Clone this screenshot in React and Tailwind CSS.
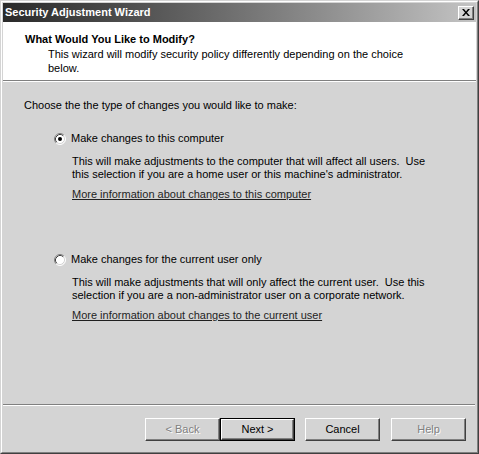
import React from 'react';

function Radio({ checked }) {
    return (
        <svg width="12" height="12" viewBox="0 0 12 12" className="shrink-0">
            <circle cx="6" cy="6" r="5" fill="#ffffff" />
            <path d="M2.11 9.89 A5.5 5.5 0 0 1 9.89 2.11" fill="none" stroke="#808080" strokeWidth="1" />
            <path d="M9.89 2.11 A5.5 5.5 0 0 1 2.11 9.89" fill="none" stroke="#ffffff" strokeWidth="1" />
            <path d="M2.82 9.18 A4.5 4.5 0 0 1 9.18 2.82" fill="none" stroke="#404040" strokeWidth="1" />
            <path d="M9.18 2.82 A4.5 4.5 0 0 1 2.82 9.18" fill="none" stroke="#d4d4d4" strokeWidth="1" />
            {checked && <circle cx="6" cy="6" r="2" fill="#000000" />}
        </svg>
    );
}

function Button({ label, disabled, isDefault }) {
    const face = (
        <div className="flex-1 flex items-center justify-center border border-t-white border-l-white border-r-[#404040] border-b-[#404040] shadow-[inset_-1px_-1px_0_#808080]">
            <span className={disabled ? 'text-[#808080] [text-shadow:1px_1px_0_#ffffff]' : 'text-black'}>{label}</span>
        </div>
    );
    if (isDefault) {
        return <div className="w-[75px] h-[23px] flex border border-black">{face}</div>;
    }
    return <div className="w-[75px] h-[23px] flex">{face}</div>;
}

function Choice({ checked, label, lines, link }) {
    return (
        <div className="flex flex-col">
            <div className="flex items-center h-[13px] pl-[51px] gap-[5px]">
                <Radio checked={checked} />
                <span>{label}</span>
            </div>
            <div className="pl-[69px] mt-[10px] leading-[13px]">
                {lines[0]}<br />{lines[1]}
            </div>
            <div className="pl-[69px] mt-[7px] leading-[13px]">
                <span className="underline text-[#1f1f1f]">{link}</span>
            </div>
        </div>
    );
}

export default function App() {
    return (
        <div className="w-[479px] h-[454px] flex font-['Liberation_Sans',sans-serif] text-[11px] leading-[13px] text-black border border-t-[#d4d4d4] border-l-[#d4d4d4] border-r-[#404040] border-b-[#404040]">
            <div className="flex-1 flex border border-t-white border-l-white border-r-[#808080] border-b-[#808080]">
                <div className="flex-1 flex flex-col p-px bg-[#d4d4d4]">
                    {/* Title bar */}
                    <div className="h-[19px] flex items-center justify-between pl-[2px] pr-[2px] bg-gradient-to-r from-[#2a2a2a] to-[#c4c4c4]">
                        <span className="font-bold text-white">Security Adjustment Wizard</span>
                        <div className="w-[16px] h-[14px] flex items-center justify-center bg-[#d4d4d4] border border-t-white border-l-white border-r-[#404040] border-b-[#404040] shadow-[inset_-1px_-1px_0_#808080]">
                            <svg width="8" height="7" viewBox="0 0 8 7">
                                <path d="M0 0h2l2 2.5L6 0h2L5 3.5 8 7H6L4 4.5 2 7H0l3-3.5z" fill="#000" />
                            </svg>
                        </div>
                    </div>

                    {/* Header */}
                    <div className="h-[59px] shrink-0 bg-white pt-[11px] border-b border-b-[#808080]">
                        <div className="pl-[22px] font-bold">What Would You Like to Modify?</div>
                        <div className="pl-[45px] mt-px leading-[14px]">
                            This wizard will modify security policy differently depending on the choice<br />below.
                        </div>
                    </div>
                    <div className="h-px bg-white" />

                    {/* Body */}
                    <div className="flex-1 flex flex-col pt-[17px]">
                        <div className="pl-[21px]">Choose the the type of changes you would like to make:</div>
                        <div className="mt-[20px]">
                            <Choice
                                checked
                                label="Make changes to this computer"
                                lines={[
                                    'This will make adjustments to the computer that will affect all users.\u00a0 Use',
                                    "this selection if you are a home user or this machine's administrator.",
                                ]}
                                link="More information about changes to this computer"
                            />
                        </div>
                        <div className="mt-[52px]">
                            <Choice
                                label="Make changes for the current user only"
                                lines={[
                                    'This will make adjustments that will only affect the current user.\u00a0 Use this',
                                    'selection if you are a non-administrator user on a corporate network.',
                                ]}
                                link="More information about changes to the current user"
                            />
                        </div>
                    </div>

                    {/* Footer */}
                    <div className="h-px bg-[#808080] mr-px" />
                    <div className="h-px bg-white mr-px" />
                    <div className="flex justify-end pt-[12px] pb-[10px] pr-[10px]">
                        <Button label="< Back" disabled />
                        <Button label="Next >" isDefault />
                        <div className="w-[10px]" />
                        <Button label="Cancel" />
                        <div className="w-[11px]" />
                        <Button label="Help" disabled />
                    </div>
                </div>
            </div>
        </div>
    );
}
